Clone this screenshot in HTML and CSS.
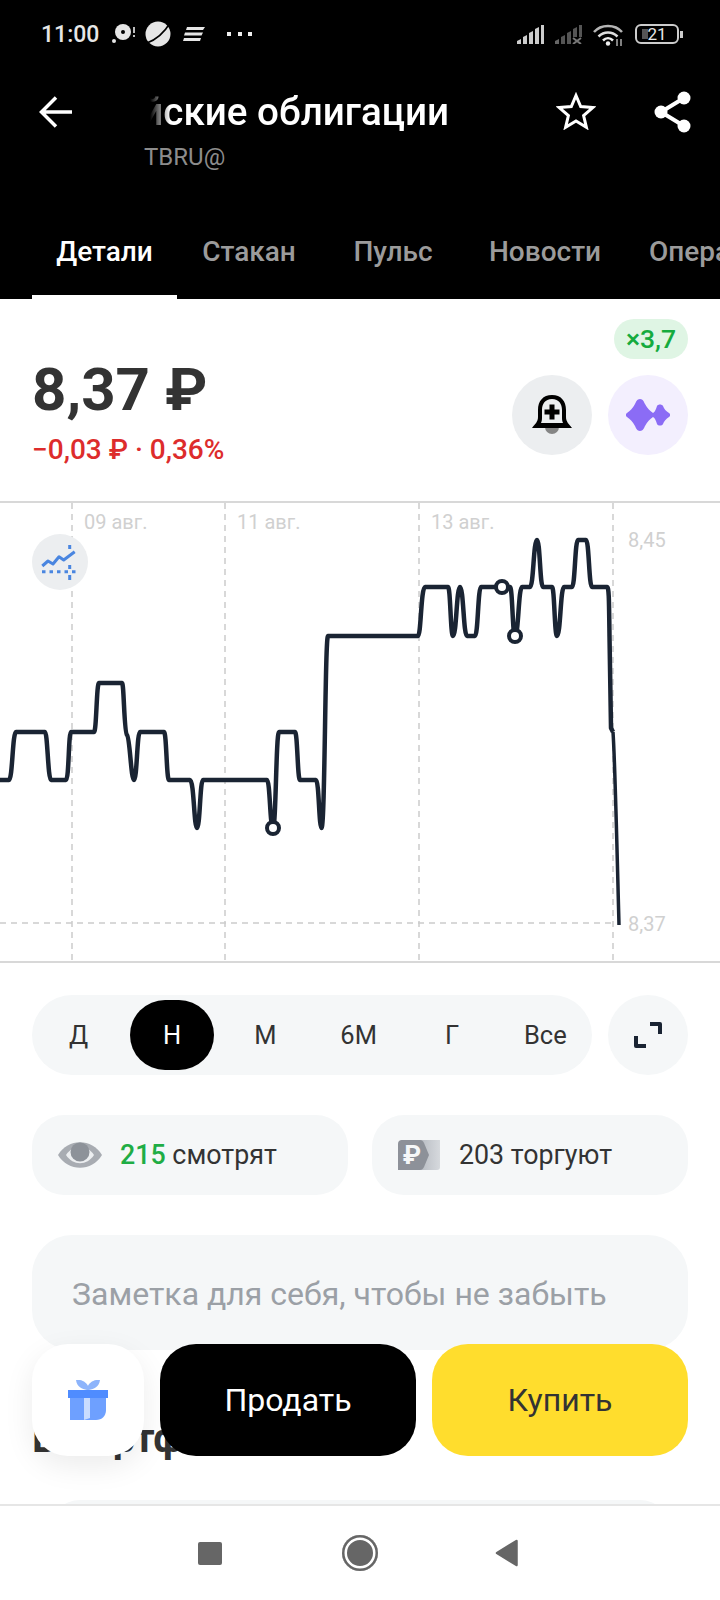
FILE: index.html
```html
<!DOCTYPE html>
<html lang="ru">
<head>
<meta charset="UTF-8" />
<meta name="viewport" content="width=device-width, initial-scale=1" />
<title>TBRU@</title>
<link rel="stylesheet" href="styles.css">
</head>
<body>
<div class="screen">

  <header class="topHeader">
    <div class="statusBar">
      <span class="statusTime">11:00</span>
      <svg class="statusDisc" width="24" height="20" viewBox="0 0 24 20">
        <circle cx="11" cy="8" r="8" fill="#e6e6e6"/>
        <circle cx="11" cy="8" r="2" fill="#000"/>
        <circle cx="2" cy="17" r="2" fill="#e6e6e6"/>
        <rect x="21" y="3" width="2" height="6" fill="#bbb"/>
        <rect x="21" y="11" width="2" height="2" fill="#bbb"/>
      </svg>
      <svg class="statusPlanet" width="26" height="26" viewBox="0 0 26 26">
        <circle cx="13" cy="13" r="12.5" fill="#e6e6e6"/>
        <path d="M2 22C10 19 19 12 25 2" fill="none" stroke="#000" stroke-width="1.600"/>
      </svg>
      <svg class="statusLines" width="22" height="14" viewBox="0 0 22 14">
        <path d="M4 0H22L20 3H3Z M2 5.500H20L18.500 8.500H1Z M1 11H18L17 14H0Z" fill="#e6e6e6"/>
      </svg>
      <div class="statusDots"><i></i><i></i><i></i></div>
      <div class="statusRight">
        <svg width="27" height="19" viewBox="0 0 27 19">
          <path d="M0 19V16L4 14V19Z M6 19V12L10 10V19Z M12 19V8L16 6V19Z M18 19V4L22 2V19Z" fill="#ccc"/>
          <rect x="24" y="0" width="3" height="19" fill="#ccc"/>
        </svg>
        <svg width="27" height="19" viewBox="0 0 27 19">
          <path d="M0 19V16L4 14V19Z" fill="#666"/>
          <path d="M6 19V12L10 10V19Z M12 19V8L16 6V19Z" fill="#555"/>
          <path d="M18 12V4L22 2V12Z" fill="#555"/>
          <rect x="24" y="0" width="3" height="12" fill="#555"/>
          <path d="M18 13L26 19M26 13L18 19" stroke="#777" stroke-width="2"/>
        </svg>
        <svg width="31" height="23" viewBox="0 0 31 23" fill="none">
          <path d="M1 9C8 1 22 1 29 9" stroke="#b5b5b5" stroke-width="2.500"/>
          <path d="M5.500 13.500C11 8 19 8 24.500 13.500" stroke="#ddd" stroke-width="2.500"/>
          <path d="M10 17.500C13 14.500 17 14.500 20 17.500" stroke="#eee" stroke-width="2.500"/>
          <circle cx="15" cy="20.500" r="2.200" fill="#eee"/>
          <path d="M24 16V23M28 16V23" stroke="#aaa" stroke-width="1.500"/>
        </svg>
        <div class="battery">
          <span class="batteryLevel"></span>
          <span class="batteryText">21</span>
        </div>
        <span class="batteryCap"></span>
      </div>
    </div>

    <div class="toolBar">
      <svg class="backIcon" width="34" height="32" viewBox="0 0 34 32" fill="none" stroke="#fff" stroke-width="3.500">
        <path d="M33 16H3M17 1.500L2.500 16L17 30.500"/>
      </svg>
      <div class="titleBlock">
        <div class="titleClip"><span>Российские облигации</span></div>
        <div class="ticker">TBRU@</div>
      </div>
      <svg class="starIcon" width="40" height="38" viewBox="0 0 40 38" fill="none" stroke="#fff" stroke-width="3" stroke-linejoin="miter">
        <path d="M20 3.500L24.700 14.600L36.800 15.600L27.600 23.500L30.400 35.300L20 29L9.600 35.300L12.400 23.500L3.200 15.600L15.300 14.600Z"/>
      </svg>
      <svg class="shareIcon" width="38" height="42" viewBox="0 0 38 42">
        <path d="M30 7L7 21L30 35" fill="none" stroke="#fff" stroke-width="4"/>
        <circle cx="30" cy="7" r="6.500" fill="#fff"/>
        <circle cx="7" cy="21" r="6.500" fill="#fff"/>
        <circle cx="30" cy="35" r="6.500" fill="#fff"/>
      </svg>
    </div>

    <nav class="tabs">
      <div class="tab tabActive">Детали</div>
      <div class="tab">Стакан</div>
      <div class="tab">Пульс</div>
      <div class="tab">Новости</div>
      <div class="tab">Операции</div>
    </nav>
  </header>

  <main class="content">
    <section class="quote">
      <div class="quotePrice">
        <div class="price">8,37 ₽</div>
        <div class="priceChange">−0,03 ₽ · 0,36%</div>
      </div>
      <div class="quoteSide">
        <div class="chip">×3,7</div>
        <div class="roundBtns">
          <div class="roundBtn bellBtn">
            <svg width="40" height="40" viewBox="0 0 40 40">
              <circle cx="20" cy="32" r="7" fill="#858585"/>
              <path d="M20 0C11 0 6 6 6 15V22C6 27 3 29 0 33H40C37 29 34 27 34 22V15C34 6 29 0 20 0Z" fill="#000"/>
              <path d="M20 4C13 4 10 9 10 15V23C10 25 9.500 27 9 28H31C30.500 27 30 25 30 23V15C30 9 27 4 20 4Z" fill="#eceef0"/>
              <path d="M17.500 9.500H22.500V14.500H27.500V19.500H22.500V24.500H17.500V19.500H12.500V14.500H17.500Z" fill="#000"/>
            </svg>
          </div>
          <div class="roundBtn sparkBtn">
            <svg width="44" height="32" viewBox="0 0 44 32">
              <path d="M14 0C17 0 18 3 19 5C21 9 24 12 27 14C29 13 30 10 31 7C32 5 36 5 37 7C38 10 40 12 43 14C44.500 15 44.500 17 43 18C40 20 38 22 37 25C36 27 32 27 31 25C30 22 29 19 27 18C24 20 21 23 19 27C18 29 17 32 14 32C11 32 10 29 9 27C7 23 4 20 1 18C-0.500 17 -0.500 15 1 14C4 12 7 9 9 5C10 3 11 0 14 0Z" fill="#8b6cf5"/>
            </svg>
          </div>
        </div>
      </div>
    </section>

    <section class="chart">
      <svg class="chartSvg" width="720" height="462" viewBox="0 501 720 462">
        <g class="gridDash">
          <path d="M72 503V961M225 503V961M419 503V961M613 503V961"/>
          <path d="M0 923H613"/>
        </g>
        <path class="gridLine" d="M0 502H720M0 962H720"/>
        <g class="axisText">
          <text x="84" y="529">09 авг.</text>
          <text x="237" y="529">11 авг.</text>
          <text x="431" y="529">13 авг.</text>
          <text x="628" y="547">8,45</text>
          <text x="628" y="931">8,37</text>
        </g>
        <path class="priceLine" d="M0 780H9C12.500 780 12.500 732 16 732H45C47.500 732 48 780 51 780H66C69 780 68.500 732 71 732H94C96.500 732 96.500 683 99 683H122C124 683 124 732 127 735C130 738 131 780 134 780C137 780 137 732 140 732H164C166.500 732 166.500 780 169 780H190C194 780 194 828 197 828C200 828 200 780 203 780H267C270 780 270 828 273 828C276 828 276 732 279 732H295C297.500 732 297.500 780 300 780H316C319 780 319 828 321.500 828C325 828 325 636 328 636H418C421 636 421 587 425 587H448C450.500 587 450.500 636 453 636C456.500 636 456.500 587 460 587C463.500 587 463.500 636 467 636H475C478 636 478 587 481 587H510C512.500 587 512.500 636 515 636C518.500 636 518.500 587 522 587H530C533.500 587 533.500 540 537 540C540 540 540 587 543 587H552C554.500 587 554.500 636 557 636C560.500 636 560.500 587 564 587H572C575 587 575 540 578 540H586C589 540 589 587 592 587H607C609 587 609 600 609.500 636L611 728L613 732"/>
        <path class="priceTail" d="M613 732C615 760 617 850 619 925"/>
        <circle class="tradeDot" cx="273" cy="828" r="6"/>
        <circle class="tradeDot" cx="502" cy="587" r="6"/>
        <circle class="tradeDot" cx="515" cy="636" r="6"/>
      </svg>
      <div class="chartMode">
        <svg width="56" height="56" viewBox="0 0 56 56" fill="none" stroke="#4a86e0">
          <path d="M10.300 32L16 27L21 30L27 22.700L31.700 26L42.700 17.700" stroke-width="3" stroke-linejoin="round"/>
          <path d="M10 37.700H44" stroke-width="3" stroke-dasharray="3.500 4"/>
          <path d="M37.700 11V15M37.700 31V35M37.700 41V46" stroke-width="3"/>
        </svg>
      </div>
    </section>

    <section class="periods">
      <div class="periodPill">
        <div class="period">Д</div>
        <div class="period periodActive">Н</div>
        <div class="period">М</div>
        <div class="period">6М</div>
        <div class="period">Г</div>
        <div class="period">Все</div>
      </div>
      <div class="expandBtn">
        <svg width="28" height="26" viewBox="0 0 28 26" fill="none" stroke="#1a2433" stroke-width="4" stroke-linejoin="round">
          <path d="M16 2H26V12M2 14V24H12"/>
        </svg>
      </div>
    </section>

    <section class="stats">
      <div class="statCard">
        <svg class="eyeIcon" width="44" height="26" viewBox="0 0 44 26">
          <path d="M0 13C10 -4 34 -4 44 13C34 30 10 30 0 13Z" fill="#a8acb2"/>
          <path d="M8 13C15 2 29 2 36 13C29 24 15 24 8 13Z" fill="#eceef0"/>
          <circle cx="22" cy="10" r="9.500" fill="#8d9299"/>
        </svg>
        <span><b class="greenNum">215</b> смотрят</span>
      </div>
      <div class="statCard">
        <svg class="rubIcon" width="42" height="30" viewBox="0 0 42 30">
          <defs>
            <linearGradient id="rubFade" x1="0" x2="1" y1="0" y2="0">
              <stop offset="0.5" stop-color="#b9bdc4"/>
              <stop offset="1" stop-color="#d6d9dd"/>
            </linearGradient>
          </defs>
          <path d="M3 0H42V27A3 3 0 0 1 39 30H3Z" fill="url(#rubFade)"/>
          <path d="M4 0H22C24 0 25 1 26 3L31 15L26 27C25 29 24 30 22 30H0V4A4 4 0 0 1 4 0Z" fill="#8d9199"/>
          <text class="rubGlyph" x="14" y="24">₽</text>
        </svg>
        <span>203 торгуют</span>
      </div>
    </section>

    <section class="note">Заметка для себя, чтобы не забыть</section>

    <h2 class="sectionTitle">В портфеле</h2>
    <div class="portfolioCard"></div>

    <div class="actions">
      <div class="giftBtn">
        <svg width="40" height="40" viewBox="0 0 40 40">
          <path d="M19 10C14 9 9 7 8 0C14 -1 19 3 20 6C21 3 26 -1 32 0C31 7 26 9 21 10Z" fill="#8db4fb"/>
          <path d="M2 18H38V30C38 36 34 40 28 40H2Z" fill="#6ea0ff"/>
          <path d="M16 18H22V38L16 40Z" fill="#c9dcff"/>
          <rect y="10" width="40" height="8" fill="#4f8cff"/>
        </svg>
      </div>
      <div class="tradeBtn sellBtn">Продать</div>
      <div class="tradeBtn buyBtn">Купить</div>
    </div>
  </main>

  <footer class="navBar">
    <span class="navSquare"></span>
    <span class="navCircle"></span>
    <svg width="24" height="28" viewBox="0 0 24 28">
      <path d="M21.500 2L2 14L21.500 26Z" fill="#666" stroke="#666" stroke-width="2.500" stroke-linejoin="round"/>
    </svg>
  </footer>

</div>
</body>
</html>
```

FILE: styles.css
```css
* {
  box-sizing: border-box;
}

body {
  margin: 0;
  background: #fff;
  font-family: Roboto, "Liberation Sans", sans-serif;
}

.screen {
  width: 720px;
  height: 1600px;
  display: flex;
  flex-direction: column;
  overflow: hidden;
}

/* header */
.topHeader {
  height: 299px;
  flex: none;
  background: #000;
  color: #fff;
}

.statusBar {
  height: 68px;
  display: flex;
  align-items: center;
  padding: 0 37px 0 41px;
}

.statusTime {
  font-size: 23px;
  font-weight: 500;
  color: #e6e6e6;
}

.statusDisc {
  margin-left: 13px;
}

.statusPlanet {
  margin-left: 9px;
}

.statusLines {
  margin-left: 12px;
}

.statusDots {
  display: flex;
  gap: 6.500px;
  margin-left: 22px;
}

.statusDots i {
  width: 4px;
  height: 4px;
  background: #eee;
}

.statusRight {
  margin-left: auto;
  display: flex;
  align-items: center;
  gap: 11px;
}

.battery {
  position: relative;
  width: 44px;
  height: 20px;
  border: 2px solid #ccc;
  border-radius: 6px;
  display: flex;
  align-items: center;
  justify-content: center;
}

.batteryLevel {
  position: absolute;
  left: 5px;
  top: 3px;
  width: 6px;
  height: 10px;
  background: #555;
}

.batteryText {
  position: relative;
  font-size: 17px;
  color: #e6e6e6;
}

.batteryCap {
  width: 3px;
  height: 7px;
  margin-left: -10px;
  background: #ccc;
}

.toolBar {
  display: flex;
  align-items: flex-start;
  padding: 24px 0 0 39px;
  height: 152px;
}

.backIcon {
  flex: none;
  margin-top: 4px;
}

.titleBlock {
  width: 305px;
  margin-left: 71px;
  flex: none;
}

.titleClip {
  display: flex;
  justify-content: flex-end;
  overflow: hidden;
  white-space: nowrap;
  font-size: 38.600px;
  line-height: 40px;
  font-weight: 500;
  -webkit-mask-image: linear-gradient(90deg, transparent 6px, #000 26px);
  mask-image: linear-gradient(90deg, transparent 6px, #000 26px);
}

.titleClip span {
  flex: none;
}

.ticker {
  margin-top: 10px;
  font-size: 24px;
  line-height: 30px;
  color: #8c8c8c;
}

.starIcon {
  flex: none;
  margin: 0 0 0 107px;
}

.shareIcon {
  flex: none;
  margin: -1px 0 0 58px;
}

.tabs {
  display: flex;
  height: 79px;
  padding-left: 32px;
  overflow: hidden;
}

.tab {
  flex: none;
  min-width: 144px;
  height: 79px;
  padding: 15px 24px 0;
  text-align: center;
  font-size: 28px;
  line-height: 34px;
  font-weight: 500;
  color: #9b9b9b;
}

.tabActive {
  min-width: 145px;
  color: #fff;
  border-bottom: 4px solid #fff;
}

/* main */
.content {
  position: relative;
  flex: 1;
  min-height: 0;
  overflow: hidden;
}

.quote {
  height: 203px;
  padding: 20px 32px 0;
  display: flex;
  justify-content: space-between;
}

.quotePrice {
  padding-top: 36px;
}

.price {
  font-size: 60px;
  line-height: 70px;
  font-weight: 700;
  color: #333;
}

.priceChange {
  margin-top: 9px;
  font-size: 28px;
  line-height: 32px;
  font-weight: 500;
  color: #dd2c2c;
}

.quoteSide {
  display: flex;
  flex-direction: column;
  align-items: flex-end;
}

.chip {
  width: 74px;
  height: 40px;
  border-radius: 20px;
  background: #dff5e4;
  color: #15ab3e;
  font-size: 26.500px;
  line-height: 40px;
  font-weight: 500;
  text-align: center;
}

.roundBtns {
  display: flex;
  gap: 16px;
  margin-top: 16px;
}

.roundBtn {
  width: 80px;
  height: 80px;
  border-radius: 50%;
  display: flex;
  align-items: center;
  justify-content: center;
}

.bellBtn {
  background: #eceef0;
}

.sparkBtn {
  background: #f3effe;
}

.chart {
  position: relative;
  height: 462px;
  margin-top: -1px;
}

.chartSvg {
  display: block;
}

.gridDash {
  fill: none;
  stroke: #ccc;
  stroke-width: 1.500;
  stroke-dasharray: 6 5;
}

.gridLine {
  fill: none;
  stroke: #ccc;
  stroke-width: 1.500;
}

.axisText {
  font-size: 20px;
  fill: #d0d0d0;
}

.priceLine {
  fill: none;
  stroke: #1a2433;
  stroke-width: 4.500;
  stroke-linejoin: round;
}

.priceTail {
  fill: none;
  stroke: #1a2433;
  stroke-width: 3.500;
}

.tradeDot {
  fill: #fff;
  stroke: #1a2433;
  stroke-width: 4;
}

.chartMode {
  position: absolute;
  left: 32px;
  top: 33px;
  width: 56px;
  height: 56px;
  border-radius: 50%;
  background: #eceef0;
}

.periods {
  display: flex;
  gap: 16px;
  margin: 32px 32px 0;
}

.periodPill {
  flex: 1;
  height: 80px;
  padding: 5px 0;
  display: flex;
  border-radius: 40px;
  background: #f5f7f8;
}

.period {
  flex: 1;
  margin: 0 5px;
  border-radius: 35px;
  font-size: 25.500px;
  line-height: 70px;
  text-align: center;
  color: #333;
}

.periodActive {
  background: #000;
  color: #fff;
}

.expandBtn {
  width: 80px;
  height: 80px;
  border-radius: 50%;
  background: #f5f7f8;
  display: flex;
  align-items: center;
  justify-content: center;
}

.stats {
  display: flex;
  gap: 24px;
  margin: 40px 32px 0;
}

.statCard {
  flex: 1;
  height: 80px;
  padding-left: 26px;
  display: flex;
  align-items: center;
  border-radius: 32px;
  background: #f5f7f8;
  font-size: 26.800px;
  color: #333;
}

.eyeIcon {
  margin-right: 18px;
}

.rubIcon {
  margin-right: 19px;
}

.rubGlyph {
  font-size: 26px;
  font-weight: 700;
  text-anchor: middle;
  fill: #f5f7f8;
}

.greenNum {
  font-weight: 500;
  color: #1fad45;
}

.note {
  height: 115px;
  margin: 40px 32px 0;
  padding: 40px 40px 0;
  border-radius: 40px;
  background: #f5f7f8;
  font-size: 32px;
  line-height: 38px;
  color: #9ba0a6;
}

.sectionTitle {
  margin: 67px 32px 0;
  font-size: 40px;
  line-height: 44px;
  font-weight: 700;
  color: #333;
}

.portfolioCard {
  height: 60px;
  margin: 39px 50px 0;
  border-radius: 32px;
  background: #f5f7f8;
}

.actions {
  position: absolute;
  left: 32px;
  right: 32px;
  top: 1045px;
  display: flex;
  gap: 16px;
}

.giftBtn {
  flex: none;
  width: 112px;
  height: 112px;
  border-radius: 36px;
  background: #fff;
  box-shadow: 0 10px 30px rgba(0, 0, 0, 0.08);
  display: flex;
  align-items: center;
  justify-content: center;
}

.tradeBtn {
  flex: 1;
  height: 112px;
  border-radius: 36px;
  font-size: 32px;
  line-height: 112px;
  text-align: center;
}

.sellBtn {
  background: #000;
  color: #fff;
}

.buyBtn {
  background: #ffdd2d;
  color: #333;
}

/* android nav */
.navBar {
  position: relative;
  flex: none;
  height: 96px;
  background: #fff;
  border-top: 2px solid #e6e6e6;
  display: flex;
  align-items: center;
  padding: 0 0 0 198px;
}

.navSquare {
  width: 24px;
  height: 23px;
  border-radius: 2px;
  background: #666;
}

.navCircle {
  width: 36px;
  height: 36px;
  margin-left: 120px;
  border-radius: 50%;
  background: #666;
  box-shadow: inset 0 0 0 2.500px #666, inset 0 0 0 5px #fff;
}

.navBar svg {
  margin-left: 117px;
}
```
